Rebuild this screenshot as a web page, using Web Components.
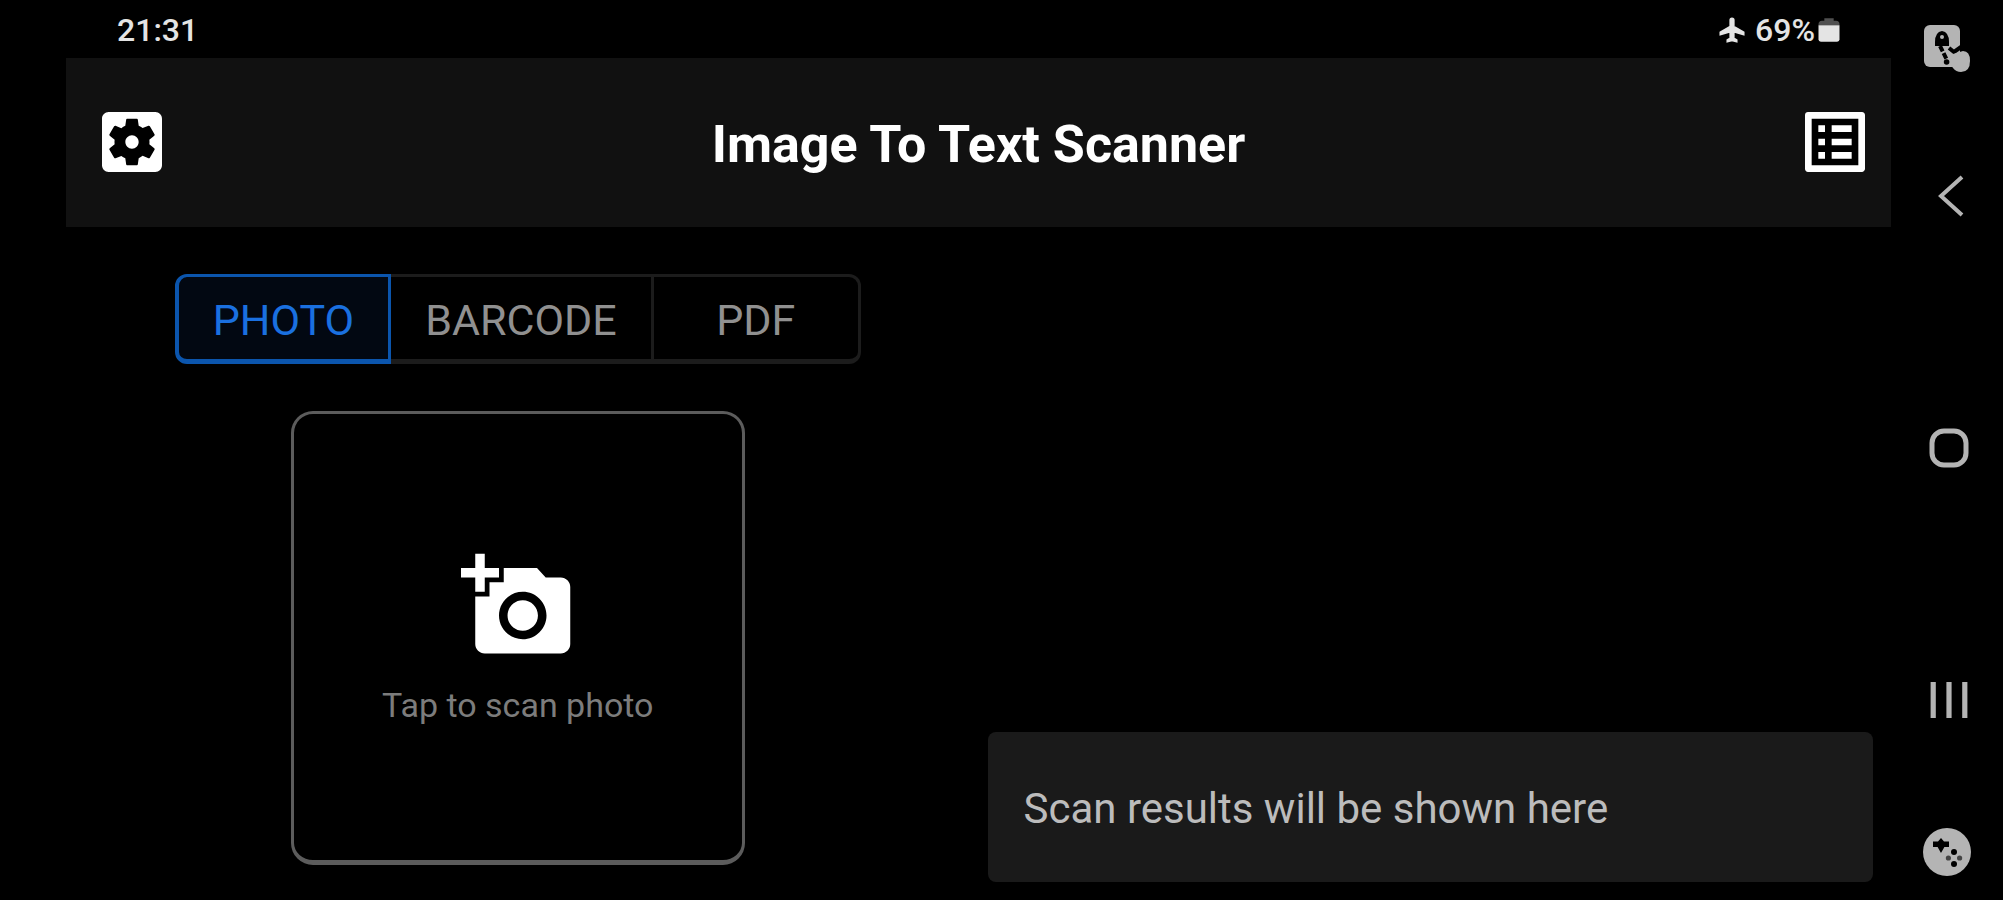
<!DOCTYPE html>
<html lang="en">
<head>
<meta charset="utf-8">
<meta name="viewport" content="width=device-width, initial-scale=1">
<title>Image To Text Scanner</title>
<style>
  body {
    margin: 0;
    background: #000;
    color: #fff;
    font-family: Roboto, "Liberation Sans", sans-serif;
  }
</style>
</head>
<body>
<scanner-app></scanner-app>

<script>
(function (customElements) {

    const ICONS = {
        airplane: '<path stroke="currentColor" stroke-width="1.500" d="M22 16v-2l-8.500-5V3.500C13.500 2.670 12.830 2 12 2s-1.500.670-1.500 1.500V9L2 14v2l8.500-2.500V19L8 20.500V22l4-1 4 1v-1.500L13.500 19v-5.500z"/>',
        battery: '<path opacity=".35" d="M8 2h8v2h2q3 0 3 3v1H3V7q0-3 3-3h2z"/><path d="M3 8h18v12q0 2-2 2H5q-2 0-2-2z"/>',
        settings: '<path fill="#000" d="M4 4h16v16H4z"/><path d="M12 10c-1.100 0-2 .900-2 2s.900 2 2 2 2-.900 2-2-.900-2-2-2zm7-7H5c-1.110 0-2 .900-2 2v14c0 1.100.890 2 2 2h14c1.110 0 2-.900 2-2V5c0-1.100-.890-2-2-2zm-1.750 9c0 .230-.020.460-.050.680l1.480 1.160c.130.110.170.300.080.450l-1.400 2.420c-.090.150-.270.210-.430.150l-1.740-.700c-.360.280-.760.510-1.180.690l-.260 1.850c-.030.170-.180.300-.350.300h-2.800c-.170 0-.320-.130-.350-.290l-.260-1.850c-.430-.180-.820-.410-1.180-.690l-1.740.700c-.160.060-.340 0-.430-.150l-1.400-2.420c-.090-.150-.050-.340.080-.450l1.480-1.160c-.030-.230-.050-.460-.050-.690 0-.230.020-.460.050-.680l-1.480-1.160c-.130-.110-.170-.300-.080-.450l1.400-2.420c.090-.150.270-.210.430-.150l1.740.700c.360-.280.760-.510 1.180-.690l.260-1.850c.030-.170.180-.300.350-.300h2.800c.170 0 .320.130.350.290l.260 1.850c.430.180.820.410 1.180.690l1.740-.700c.160-.060.340 0 .430.150l1.400 2.420c.090.150.050.340-.080.450l-1.480 1.160c.030.230.050.460.050.690z"/>',
        list: '<path fill="#000" d="M4 4h16v16H4z"/><path d="M19 5v14H5V5h14m1.100-2H3.900c-.500 0-.900.400-.900.900v16.200c0 .400.400.900.900.900h16.200c.400 0 .900-.500.900-.900V3.900c0-.500-.500-.900-.900-.900zM11 7h6v2h-6V7zm0 4h6v2h-6v-2zm0 4h6v2h-6v-2zM7 7h2v2H7V7zm0 4h2v2H7v-2zm0 4h2v2H7v-2z"/>',
        camera: '<path d="M3 4V1h2v3h3v2H5v3H3V6H0V4h3zm3 6V7h3V4h7l1.830 2H21c1.100 0 2 .900 2 2v12c0 1.100-.900 2-2 2H5c-1.100 0-2-.900-2-2V10h3zm7 9c2.760 0 5-2.240 5-5s-2.240-5-5-5-5 2.240-5 5 2.240 5 5 5zm-3.200-5c0 1.770 1.430 3.200 3.200 3.200s3.200-1.430 3.200-3.200-1.430-3.200-3.200-3.200-3.200 1.430-3.200 3.200z"/>',
        touchLock: '<rect x="0.500" y="0.500" width="18" height="21" rx="3"/><path fill="#000" d="M6 9q0-5 3.500-5.500Q13 4 13 9v2H6z"/><circle cx="9.500" cy="6.500" r="1"/><path fill="none" stroke="#000" stroke-width="2" stroke-dasharray="3 1" d="M8.500 11l3.500 7"/><path fill="none" stroke="#000" stroke-width="2" d="M13 12l2.500 2 3.500-2.500"/><path d="M13 19l2 3q1.500 2 4 2 4.500 0 4.500-5.500 0-5-3.500-5L15 15z"/><circle cx="11.800" cy="19" r="1.400" fill="#000"/>',
        back: '<path fill="none" stroke="currentColor" stroke-width="2" d="M18.500 2.500L8 12l10.500 9.500"/>',
        home: '<rect x="3.500" y="3.500" width="17" height="17" rx="6" fill="none" stroke="currentColor" stroke-width="2.500"/>',
        recents: '<path d="M2.800 3h2.600v18H2.800zM10.700 3h2.600v18h-2.600zM18.600 3h2.600v18h-2.600z"/>',
        gamepad: '<circle cx="12" cy="12" r="12"/><path fill="#000" d="M5 6.800h2.500l1.500-1.800 1.500 1.800H13v2.700h-2.300L9 12.500 7.300 9.500H5z"/><circle cx="15.500" cy="12" r="1.500" fill="#000"/><circle cx="15.500" cy="18" r="1.500" fill="#000"/><circle cx="12.700" cy="15" r="1.300" fill="#444"/><circle cx="18.300" cy="15" r="1.300" fill="#444"/>'
    };

    /**
     * Attaches an open shadow root filled with the given markup.
     * @param {HTMLElement} host - The custom element.
     * @param {string} html - Styles and markup of the component.
     */
    const render = (host, html) => {
        const template = document.createElement('template');
        template.innerHTML = html;
        host.attachShadow({ mode: 'open' }).appendChild(template.content.cloneNode(true));
    };

    /** Icon looked up by name, sized with --size. */
    class AppIcon extends HTMLElement {
        connectedCallback() {
            render(this, `
      <style>
        :host { display: block; width: var(--size, 48px); height: var(--size, 48px); }
        svg { display: block; width: 100%; height: 100%; fill: currentColor; overflow: visible; }
      </style>
      <svg viewBox="0 0 24 24" aria-hidden="true">${ICONS[this.getAttribute('name')]}</svg>
    `);
        }
    }

    /** Button holding a single icon. */
    class IconButton extends HTMLElement {
        connectedCallback() {
            render(this, `
      <style>
        :host { display: block; }
        button { display: block; padding: 0; border: 0; background: none; color: inherit; cursor: pointer; }
      </style>
      <button type="button" aria-label="${this.getAttribute('label')}">
        <app-icon name="${this.getAttribute('icon')}"></app-icon>
      </button>
    `);
        }
    }

    class StatusBar extends HTMLElement {
        connectedCallback() {
            render(this, `
      <style>
        :host {
          display: flex;
          justify-content: space-between;
          align-items: center;
          height: 58px;
          padding: 2px 48px 0 51px;
          box-sizing: border-box;
          font-size: 32px;
          font-weight: 500;
          color: #e4e4e4;
        }
        .indicators { display: flex; align-items: center; --size: 28px; }
        .level { margin-left: 9px; }
      </style>
      <slot name="time"></slot>
      <div class="indicators">
        <app-icon name="airplane"></app-icon>
        <span class="level"><slot name="battery"></slot></span>
        <app-icon name="battery"></app-icon>
      </div>
    `);
        }
    }

    class AppHeader extends HTMLElement {
        connectedCallback() {
            render(this, `
      <style>
        :host {
          display: grid;
          grid-template-columns: 90px 1fr 90px;
          align-items: center;
          height: 169px;
          padding: 0 16px 2px;
          box-sizing: border-box;
          background: #111;
          --size: 80px;
        }
        h1 { margin: 0; padding-top: 6px; font-size: 52px; font-weight: 700; text-align: center; }
        icon-button { justify-self: end; }
      </style>
      <icon-button icon="settings" label="Settings"></icon-button>
      <h1><slot></slot></h1>
      <icon-button icon="list" label="History"></icon-button>
    `);
        }
    }

    /** Segmented switch between the scan modes. */
    class ModeTabs extends HTMLElement {
        connectedCallback() {
            const tabs = this.getAttribute('modes').split(',');
            render(this, `
      <style>
        :host { display: block; }
        div { display: flex; }
        button {
          min-width: 207px;
          height: 90px;
          padding: 4px 34px 0;
          border: solid #1c1c1c;
          border-width: 3px 3px 5px 0;
          background: #000;
          color: #909090;
          font: inherit;
          font-size: 43px;
          cursor: pointer;
        }
        button:first-child { border-left-width: 4px; border-radius: 12px 0 0 12px; }
        button:last-child { border-radius: 0 12px 12px 0; }
        button[aria-selected="true"] { border-color: #0b55ad; background: #020812; color: #1a70e0; }
      </style>
      <div role="tablist">
        ${tabs.map((tab, i) => `<button type="button" role="tab" aria-selected="${i === 0}">${tab}</button>`).join('')}
      </div>
    `);
            const buttons = this.shadowRoot.querySelectorAll('button');
            buttons.forEach((button) => button.addEventListener('click', () => {
                buttons.forEach((other) => other.setAttribute('aria-selected', other === button));
            }));
        }
    }

    class PhotoPicker extends HTMLElement {
        connectedCallback() {
            render(this, `
      <style>
        :host { display: block; --size: 114px; }
        button {
          display: flex;
          flex-direction: column;
          align-items: center;
          justify-content: center;
          gap: 22px;
          width: 454px;
          height: 454px;
          padding: 0;
          border: solid #5c5c5c;
          border-width: 3px 3px 5px;
          border-radius: 22px;
          background: #000;
          color: #fff;
          font: inherit;
          font-size: 34px;
          cursor: pointer;
        }
        span { color: #7c7c7c; }
      </style>
      <button type="button">
        <app-icon name="camera"></app-icon>
        <span><slot></slot></span>
      </button>
    `);
        }
    }

    class ScanResults extends HTMLElement {
        connectedCallback() {
            render(this, `
      <style>
        :host {
          display: flex;
          align-items: center;
          min-height: 150px;
          padding: 2px 36px 0;
          box-sizing: border-box;
          border-radius: 8px;
          background: #1a1a1a;
          color: #bcbcbc;
          font-size: 42px;
        }
        p { margin: 0; }
      </style>
      <p><slot></slot></p>
    `);
        }
    }

    /** System navigation rail on the right edge of the screen. */
    class NavRail extends HTMLElement {
        connectedCallback() {
            render(this, `
      <style>
        :host {
          display: flex;
          flex-direction: column;
          align-items: center;
          padding: 24px 0;
          box-sizing: border-box;
          color: #b4b4b4;
          --size: 48px;
        }
        nav {
          display: flex;
          flex: 1;
          flex-direction: column;
          justify-content: space-between;
          padding: 100px 0 104px 4px;
        }
      </style>
      <icon-button icon="touchLock" label="Block touches"></icon-button>
      <nav>
        <icon-button icon="back" label="Back"></icon-button>
        <icon-button icon="home" label="Home"></icon-button>
        <icon-button icon="recents" label="Recent apps"></icon-button>
      </nav>
      <icon-button icon="gamepad" label="Game tools"></icon-button>
    `);
        }
    }

    class ScannerApp extends HTMLElement {
        connectedCallback() {
            render(this, `
      <style>
        :host {
          display: grid;
          grid-template-columns: minmax(0, 1fr) 112px;
          min-height: 100vh;
          padding-left: 66px;
          box-sizing: border-box;
        }
        .screen { display: flex; flex-direction: column; }
        main {
          display: grid;
          flex: 1;
          grid-template-columns: 1fr 1fr;
          padding-right: 18px;
        }
        .scan {
          display: flex;
          flex-direction: column;
          align-items: center;
          gap: 47px;
          padding: 47px 0 35px;
        }
        .results { align-self: end; padding: 0 0 18px 18px; }
      </style>
      <div class="screen">
        <status-bar>
          <span slot="time">21:31</span>
          <span slot="battery">69%</span>
        </status-bar>
        <app-header>Image To Text Scanner</app-header>
        <main>
          <section class="scan">
            <mode-tabs modes="PHOTO,BARCODE,PDF"></mode-tabs>
            <photo-picker>Tap to scan photo</photo-picker>
          </section>
          <section class="results">
            <scan-results>Scan results will be shown here</scan-results>
          </section>
        </main>
      </div>
      <nav-rail></nav-rail>
    `);
        }
    }

    customElements.define('app-icon', AppIcon);
    customElements.define('icon-button', IconButton);
    customElements.define('status-bar', StatusBar);
    customElements.define('app-header', AppHeader);
    customElements.define('mode-tabs', ModeTabs);
    customElements.define('photo-picker', PhotoPicker);
    customElements.define('scan-results', ScanResults);
    customElements.define('nav-rail', NavRail);
    customElements.define('scanner-app', ScannerApp);

})(window.customElements);
</script>
</body>
</html>
